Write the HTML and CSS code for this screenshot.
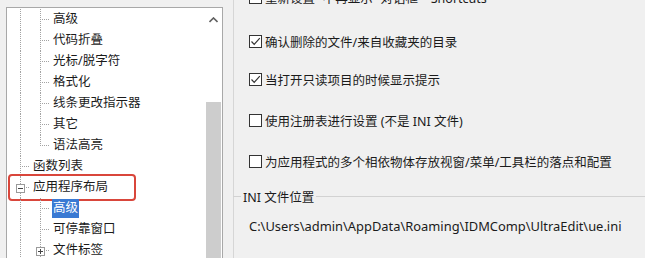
FILE: index.html
```html
<!DOCTYPE html>
<html lang="zh-CN">
<head>
    <meta charset="UTF-8">
    <title>配置 - 应用程序布局</title>
    <link rel="stylesheet" href="styles.css">
</head>
<body>
    <div class="window">
        <div class="tree">
            <ul class="tree-list">
                <li class="node"><span class="c pipe"></span><span class="c tee"></span><span class="label">高级</span></li>
                <li class="node"><span class="c pipe"></span><span class="c tee"></span><span class="label">代码折叠</span></li>
                <li class="node"><span class="c pipe"></span><span class="c tee"></span><span class="label">光标/脱字符</span></li>
                <li class="node"><span class="c pipe"></span><span class="c tee"></span><span class="label">格式化</span></li>
                <li class="node"><span class="c pipe"></span><span class="c tee"></span><span class="label">线条更改指示器</span></li>
                <li class="node"><span class="c pipe"></span><span class="c tee"></span><span class="label">其它</span></li>
                <li class="node"><span class="c pipe"></span><span class="c elbow"></span><span class="label">语法高亮</span></li>
                <li class="node"><span class="c tee"></span><span class="label">函数列表</span></li>
                <li class="node marked"><span class="c tee"><span class="toggle minus"></span></span><span class="label">应用程序布局</span><span class="highlight"></span></li>
                <li class="node"><span class="c pipe"></span><span class="c tee"></span><span class="label selected">高级</span></li>
                <li class="node"><span class="c pipe"></span><span class="c tee"></span><span class="label">可停靠窗口</span></li>
                <li class="node"><span class="c pipe"></span><span class="c tee"><span class="toggle plus"></span></span><span class="label">文件标签</span></li>
            </ul>
            <div class="scrollbar">
                <div class="arrow">
                    <svg width="9" height="6" viewBox="0 0 9 6"><path d="M0.5 5 L4.5 1 L8.5 5" fill="none" stroke="#606060" stroke-width="1.6"/></svg>
                </div>
                <div class="thumb"></div>
            </div>
        </div>

        <div class="options">
            <label class="option"><span class="box"></span>重新设置 “不再显示” 对话框 – Shortcuts</label>
            <label class="option second"><span class="box checked"><svg width="11" height="11" viewBox="0 0 11 11"><path d="M1.5 5.5 L4.2 8.3 L9.8 2.2" fill="none" stroke="#333" stroke-width="1.2"/></svg></span>确认删除的文件/来自收藏夹的目录</label>
            <label class="option"><span class="box checked"><svg width="11" height="11" viewBox="0 0 11 11"><path d="M1.5 5.5 L4.2 8.3 L9.8 2.2" fill="none" stroke="#333" stroke-width="1.2"/></svg></span>当打开只读项目的时候显示提示</label>
            <label class="option"><span class="box"></span>使用注册表进行设置 (不是 INI 文件)</label>
            <label class="option"><span class="box"></span>为应用程式的多个相依物体存放视窗/菜单/工具栏的落点和配置</label>

            <fieldset class="group">
                <legend>INI 文件位置</legend>
                <div class="path">C:\Users\admin\AppData\Roaming\IDMComp\UltraEdit\ue.ini</div>
            </fieldset>
        </div>
    </div>
</body>
</html>
```

FILE: styles.css
```css
body {
    margin: 0;
    background: #f0f0f0;
    color: #1b1b1b;
    font-family: "Noto Sans", "Noto Sans CJK SC", sans-serif;
    font-size: 12.5px;
    height: 258px;
    overflow: hidden;
}
.window {
    display: flex;
    height: 258px;
}

/* tree */
.tree {
    --v: repeating-linear-gradient(to bottom, #a3a3a3 0 1px, transparent 1px 2px);
    --h: repeating-linear-gradient(to right, #a3a3a3 0 1px, transparent 1px 2px);
    margin: 7px 0 0 6px;
    width: 215px;
    border: 1px solid #a8a8a8;
    border-bottom: none;
    background: #ffffff;
    display: flex;
    flex: none;
}
.tree-list {
    list-style: none;
    margin: 0;
    padding: 1px 0 0 3px;
    flex: 1;
}
.node {
    display: flex;
    align-items: center;
    height: 21px;
    position: relative;
    white-space: nowrap;
}
.c {
    width: 20px;
    height: 21px;
    flex: none;
    display: flex;
    align-items: center;
    justify-content: center;
}
.pipe {
    background: var(--v) 10px 0 / 1px 100% no-repeat;
}
.tee {
    background: var(--h) 10px 10px / 10px 1px no-repeat, var(--v) 10px 0 / 1px 100% no-repeat;
}
.elbow {
    background: var(--h) 10px 10px / 10px 1px no-repeat, var(--v) 10px 0 / 1px 11px no-repeat;
}
.toggle {
    width: 7px;
    height: 7px;
    border: 1px solid #9a9a9a;
    background: #ffffff;
    margin-left: 1px;
    margin-top: 1px;
}
.minus {
    background: linear-gradient(#444, #444) center / 5px 1px no-repeat, #ffffff;
}
.plus {
    background: linear-gradient(#444, #444) center / 5px 1px no-repeat, linear-gradient(#444, #444) center / 1px 5px no-repeat, #ffffff;
}
.label {
    margin-left: 2px;
    padding: 1px 1px 2px;
    line-height: 16px;
}
.label.selected {
    background: #3a7ad3;
    color: #ffffff;
}
.highlight {
    position: absolute;
    left: -2px;
    top: -3px;
    width: 124px;
    height: 23px;
    border: 2px solid #d9463b;
    border-radius: 4px;
}

.scrollbar {
    width: 17px;
    display: flex;
    flex-direction: column;
    align-items: center;
    flex: none;
}
.arrow {
    height: 17px;
    display: flex;
    align-items: center;
    justify-content: center;
    padding-top: 3px;
}
.thumb {
    width: 15px;
    flex: 1;
    margin-top: 74px;
    background: #cdcdcd;
}

/* right side */
.options {
    flex: 1;
    margin-left: 10px;
    border-left: 1px solid #d6d6d6;
    padding-left: 15px;
    display: flex;
    flex-direction: column;
    gap: 21px;
    margin-top: -13px;
}
.option {
    display: flex;
    align-items: center;
    height: 20px;
    gap: 3px;
    white-space: nowrap;
}
.option.second {
    margin-top: 3px;
    margin-bottom: -3px;
}
.box {
    width: 11px;
    height: 11px;
    border: 1px solid #333333;
    background: #ffffff;
    display: flex;
    flex: none;
}
.group {
    margin: -5px 0 0 -16px;
    padding: 11px 0 0 16px;
    border: none;
    border-top: 1px solid #d2d2d2;
}
.group legend {
    padding: 0 2px;
    margin-left: -8px;
}
.path {
    white-space: nowrap;
    font-size: 12.9px;
}
```
